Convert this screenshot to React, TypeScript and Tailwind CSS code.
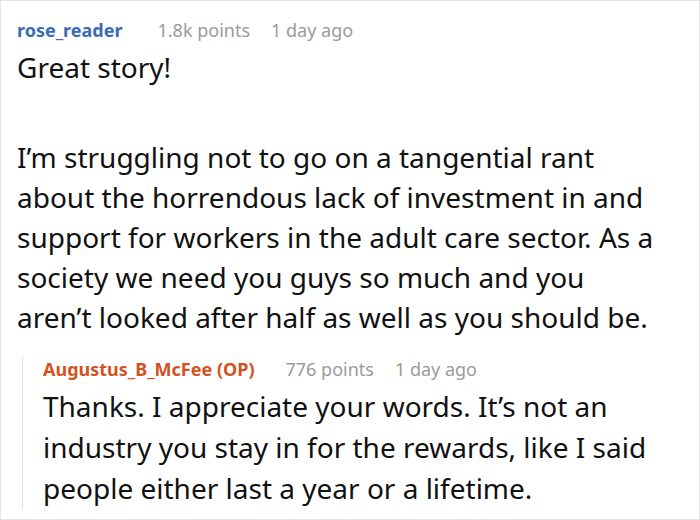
import React from "react";

const font = { fontFamily: '"Noto Sans", "Open Sans", sans-serif' };

function Meta({ name, points, time, color, gap }: { name: string; points: string; time: string; color: string; gap: string }) {
  return (
    <div className="flex items-baseline text-[18px] leading-[24px]">
      <span className={`font-bold ${color}`}>{name}</span>
      <span className={`${gap} text-[#9a9a9a]`}>{points}</span>
      <span className="ml-[21px] text-[#9a9a9a]">{time}</span>
    </div>
  );
}

export default function App() {
  return (
    <div style={font} className="w-[700px] h-[520px] bg-white border border-[#e3e3e3] overflow-hidden">
      <div className="pl-[16px] pt-[17px]">
        <Meta name="rose_reader" points="1.8k points" time="1 day ago" color="text-[#3a6cb4]" gap="ml-[35px]" />
        <div className="mt-[5px] text-[28px] text-[#111]">
          <p className="leading-[41px]">Great story!</p>
          <p className="mt-[49px] leading-[40px]">
            I’m struggling not to go on a tangential rant
            <br />
            about the horrendous lack of investment in and
            <br />
            support for workers in the adult care sector. As a
            <br />
            society we need you guys so much and you
            <br />
            aren’t looked after half as well as you should be.
          </p>
        </div>
        <div className="mt-[31px] ml-[5px] border-l border-[#e0e0e0] pl-[20px]">
          <div className="-mt-[11px]">
            <Meta name="Augustus_B_McFee (OP)" points="776 points" time="1 day ago" color="text-[#d4521f]" gap="ml-[31px]" />
          </div>
          <p className="mt-[5px] -mb-[7px] text-[28px] leading-[41px] text-[#111]">
            Thanks. I appreciate your words. It’s not an
            <br />
            industry you stay in for the rewards, like I said
            <br />
            people either last a year or a lifetime.
          </p>
        </div>
      </div>
    </div>
  );
}
